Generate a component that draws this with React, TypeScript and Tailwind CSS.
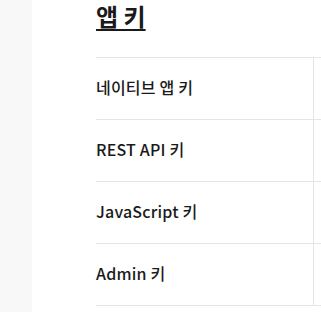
import React from "react"

const keys = ["네이티브 앱 키", "REST API 키", "JavaScript 키", "Admin 키"]

const App: React.FC = () => {
  return (
    <div
      className="flex min-h-[312px] bg-white text-[#1a1a1a]"
      style={{ fontFamily: '"Noto Sans CJK KR", "Noto Sans", sans-serif' }}
    >
      <aside className="w-8 shrink-0 bg-[#f8f8f8]" />
      <main className="flex-1 pl-16">
        <h2 className="pt-[3px] text-[24px] font-bold leading-[26px] underline decoration-2 underline-offset-[3px]">
          앱 키
        </h2>
        <table className="mt-[28px] w-full border-collapse">
          <tbody>
            {keys.map((k) => (
              <tr key={k} className="h-[62px] border-t border-[#e5e5e5]">
                <th className="w-[217px] border-r border-[#e5e5e5] p-0 pb-[4px] text-left text-[16px] font-medium tracking-[0.2px]">
                  {k}
                </th>
                <td />
              </tr>
            ))}
            <tr className="border-t border-[#e5e5e5]">
              <td colSpan={2} />
            </tr>
          </tbody>
        </table>
      </main>
    </div>
  )
}

export default App
